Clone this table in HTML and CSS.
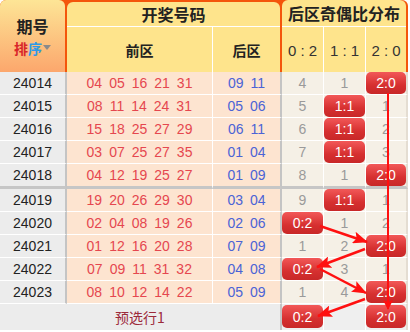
FILE: index.html
```html
<!DOCTYPE html>
<html lang="zh">
<head>
<meta charset="utf-8">
<title>后区奇偶比分布</title>
<link rel="stylesheet" href="styles.css">
</head>
<body>
<div class="board">
  <div class="head">
    <div class="h-qh">
      <div class="t1">期号</div>
      <div class="sort"><span class="pai">排</span><span class="xu">序</span><span class="tri"></span></div>
    </div>
    <div class="grp grp-kj">
      <div class="gt">开奖号码</div>
      <div class="sub">
        <div class="sc w-front">前区</div>
        <div class="sc w-back">后区</div>
      </div>
    </div>
    <div class="grp grp-jo">
      <div class="gt">后区奇偶比分布</div>
      <div class="sub">
        <div class="sc ratio w-r">0 : 2</div>
        <div class="sc ratio w-r">1 : 1</div>
        <div class="sc ratio w-r3">2 : 0</div>
      </div>
    </div>
  </div>

  <div class="rows">
    <div class="row">
      <div class="c c-no">24014</div>
      <div class="c c-f"><span>04</span><span>05</span><span>16</span><span>21</span><span>31</span></div>
      <div class="c c-b"><span>09</span><span>11</span></div>
      <div class="c c-r">4</div><div class="c c-r">1</div><div class="c c-r last"><span class="pill">2:0</span></div>
    </div>
    <div class="row">
      <div class="c c-no">24015</div>
      <div class="c c-f"><span>08</span><span>11</span><span>14</span><span>24</span><span>31</span></div>
      <div class="c c-b"><span>05</span><span>06</span></div>
      <div class="c c-r">5</div><div class="c c-r"><span class="pill">1:1</span></div><div class="c c-r last">1</div>
    </div>
    <div class="row">
      <div class="c c-no">24016</div>
      <div class="c c-f"><span>15</span><span>18</span><span>25</span><span>27</span><span>29</span></div>
      <div class="c c-b"><span>06</span><span>11</span></div>
      <div class="c c-r">6</div><div class="c c-r"><span class="pill">1:1</span></div><div class="c c-r last">2</div>
    </div>
    <div class="row">
      <div class="c c-no">24017</div>
      <div class="c c-f"><span>03</span><span>07</span><span>25</span><span>27</span><span>35</span></div>
      <div class="c c-b"><span>01</span><span>04</span></div>
      <div class="c c-r">7</div><div class="c c-r"><span class="pill">1:1</span></div><div class="c c-r last">3</div>
    </div>
    <div class="row sep">
      <div class="c c-no">24018</div>
      <div class="c c-f"><span>04</span><span>12</span><span>19</span><span>25</span><span>27</span></div>
      <div class="c c-b"><span>01</span><span>09</span></div>
      <div class="c c-r">8</div><div class="c c-r">1</div><div class="c c-r last"><span class="pill">2:0</span></div>
    </div>
    <div class="row">
      <div class="c c-no">24019</div>
      <div class="c c-f"><span>19</span><span>20</span><span>26</span><span>29</span><span>30</span></div>
      <div class="c c-b"><span>03</span><span>04</span></div>
      <div class="c c-r">9</div><div class="c c-r"><span class="pill">1:1</span></div><div class="c c-r last">1</div>
    </div>
    <div class="row">
      <div class="c c-no">24020</div>
      <div class="c c-f"><span>02</span><span>04</span><span>08</span><span>19</span><span>26</span></div>
      <div class="c c-b"><span>02</span><span>06</span></div>
      <div class="c c-r"><span class="pill">0:2</span></div><div class="c c-r">1</div><div class="c c-r last">2</div>
    </div>
    <div class="row">
      <div class="c c-no">24021</div>
      <div class="c c-f"><span>01</span><span>12</span><span>16</span><span>20</span><span>28</span></div>
      <div class="c c-b"><span>07</span><span>09</span></div>
      <div class="c c-r">1</div><div class="c c-r">2</div><div class="c c-r last"><span class="pill">2:0</span></div>
    </div>
    <div class="row">
      <div class="c c-no">24022</div>
      <div class="c c-f"><span>07</span><span>09</span><span>11</span><span>31</span><span>32</span></div>
      <div class="c c-b"><span>04</span><span>08</span></div>
      <div class="c c-r"><span class="pill">0:2</span></div><div class="c c-r">3</div><div class="c c-r last">1</div>
    </div>
    <div class="row">
      <div class="c c-no">24023</div>
      <div class="c c-f"><span>08</span><span>10</span><span>12</span><span>14</span><span>22</span></div>
      <div class="c c-b"><span>05</span><span>09</span></div>
      <div class="c c-r">1</div><div class="c c-r">4</div><div class="c c-r last"><span class="pill">2:0</span></div>
    </div>
    <div class="row pre">
      <div class="c c-pre">预选行1</div>
      <div class="c c-p"><span class="pill">0:2</span></div>
      <div class="c c-p"></div>
      <div class="c c-p last"><span class="pill">2:0</span></div>
    </div>
  </div>

  <svg class="arrows" width="410" height="332" viewBox="0 0 410 332">
    <defs>
      <marker id="ah" markerUnits="userSpaceOnUse" markerWidth="15" markerHeight="12" refX="14" refY="6" orient="auto">
        <path d="M0,0 L15,6 L0,12 L3,6 Z" fill="#ff1010"/>
      </marker>
      <marker id="ahs" markerUnits="userSpaceOnUse" markerWidth="10" markerHeight="10" refX="9" refY="5" orient="auto">
        <path d="M0,0 L10,5 L0,10 L2,5 Z" fill="#ff1010"/>
      </marker>
    </defs>
    <line x1="388" y1="93" x2="388" y2="309" stroke="#ff1010" stroke-width="2" marker-end="url(#ahs)"/>
    <line x1="320" y1="226" x2="367" y2="242" stroke="#ff1010" stroke-width="2.5" marker-end="url(#ah)"/>
    <line x1="365" y1="249" x2="317" y2="267" stroke="#ff1010" stroke-width="2.5" marker-end="url(#ah)"/>
    <line x1="320" y1="269" x2="366" y2="293" stroke="#ff1010" stroke-width="2.5" marker-end="url(#ah)"/>
    <line x1="365" y1="299" x2="318" y2="316" stroke="#ff1010" stroke-width="2.5" marker-end="url(#ah)"/>
  </svg>
</div>
</body>
</html>
```

FILE: styles.css
```css
* {
  box-sizing: border-box;
  margin: 0;
  padding: 0;
}

body {
  margin: 0;
  background: #ffffff;
  font-family: "Liberation Sans", "Noto Sans CJK SC", sans-serif;
  font-size: 14px;
}

.board {
  position: relative;
  width: 408px;
}

/* ---------- header ---------- */
.head {
  display: grid;
  grid-template-columns: 65px 213px 124px;
  column-gap: 2px;
  padding-right: 2px;
  height: 72px;
  background: #f4550b;
  border-radius: 6px 6px 0 0;
}

.h-qh {
  background: linear-gradient(#fde596, #fca66c);
  border-radius: 6px 6px 0 0;
  display: flex;
  flex-direction: column;
  align-items: center;
  justify-content: center;
  gap: 2px;
}

.t1 {
  font-family: "Noto Sans CJK SC", sans-serif;
  font-weight: 700;
  font-size: 16px;
  line-height: 20px;
  color: #222;
}

.sort {
  display: flex;
  align-items: center;
  font-family: "Noto Sans CJK SC", sans-serif;
  font-weight: 700;
  font-size: 14px;
  line-height: 20px;
}

.pai { color: #d8262a; }
.xu { color: #2e9ae6; }

.tri {
  width: 0;
  height: 0;
  margin-left: 1px;
  border-left: 4px solid transparent;
  border-right: 4px solid transparent;
  border-top: 5px solid #8a8a8a;
}

.grp {
  background: #fee48c;
  border-radius: 6px 6px 0 0;
  display: flex;
  flex-direction: column;
}

.grp-kj {
  margin-top: 2px;
}

.gt {
  flex: 1;
  display: flex;
  align-items: center;
  justify-content: center;
  border-bottom: 1px solid #ffffff;
  font-family: "Noto Sans CJK SC", sans-serif;
  font-weight: 700;
  font-size: 16px;
  color: #222;
}

.sub {
  display: flex;
  height: 46px;
}

.sc {
  display: flex;
  align-items: center;
  justify-content: center;
  font-family: "Noto Sans CJK SC", sans-serif;
  font-weight: 700;
  font-size: 14px;
  color: #222;
}

.w-front { width: 146px; border-right: 1px solid #ffffff; }
.w-back { width: 67px; }
.w-r { width: 42px; border-right: 1px solid #ffffff; }
.w-r3 { width: 40px; }

.ratio {
  font-family: "Liberation Sans", sans-serif;
  font-weight: 400;
  font-size: 15px;
  color: #333;
}

/* ---------- body ---------- */
.row {
  display: grid;
  grid-template-columns: 67px 146px 69px 42px 42px 42px;
}

.c {
  height: 23px;
  border-bottom: 1px solid #ffffff;
  display: flex;
  align-items: center;
  justify-content: center;
}

.row.sep .c {
  height: 25px;
  border-bottom: 3px solid #c6c6c6;
}

.c-no {
  background: #ececec;
  border-right: 2px solid #c4c4c4;
  color: #222;
}

.c-f {
  background: #fde4d0;
  border-right: 1px solid #ffffff;
  color: #e5474f;
  gap: 7px;
}

.c-b {
  background: #fde4d0;
  border-right: 2px solid #c4c4c4;
  color: #4b63d6;
  gap: 7px;
}

.c-r {
  background: #f5f0e6;
  border-right: 1px solid #ffffff;
  color: #9a9a9a;
}

.c.last {
  border-right: 2px solid #e4ddd2;
}

.row.pre .c {
  height: 26px;
  border-bottom: none;
}

.c-pre {
  grid-column: span 3;
  background: #ececec;
  border-right: 2px solid #c4c4c4;
  font-family: "Noto Sans CJK SC", sans-serif;
  font-size: 14px;
  color: #9c2a3a;
}

.c-p {
  background: #efefef;
  border-right: 1px solid #ffffff;
  padding: 1px 0 2px;
}

.pill {
  width: 100%;
  height: 100%;
  display: flex;
  align-items: center;
  justify-content: center;
  border-radius: 5px;
  background: linear-gradient(#f25858, #d63030 60%, #c82828);
  color: #ffffff;
  font-size: 14px;
}

/* ---------- overlay arrows ---------- */
.arrows {
  position: absolute;
  left: 0;
  top: 0;
  pointer-events: none;
  overflow: visible;
}
```
